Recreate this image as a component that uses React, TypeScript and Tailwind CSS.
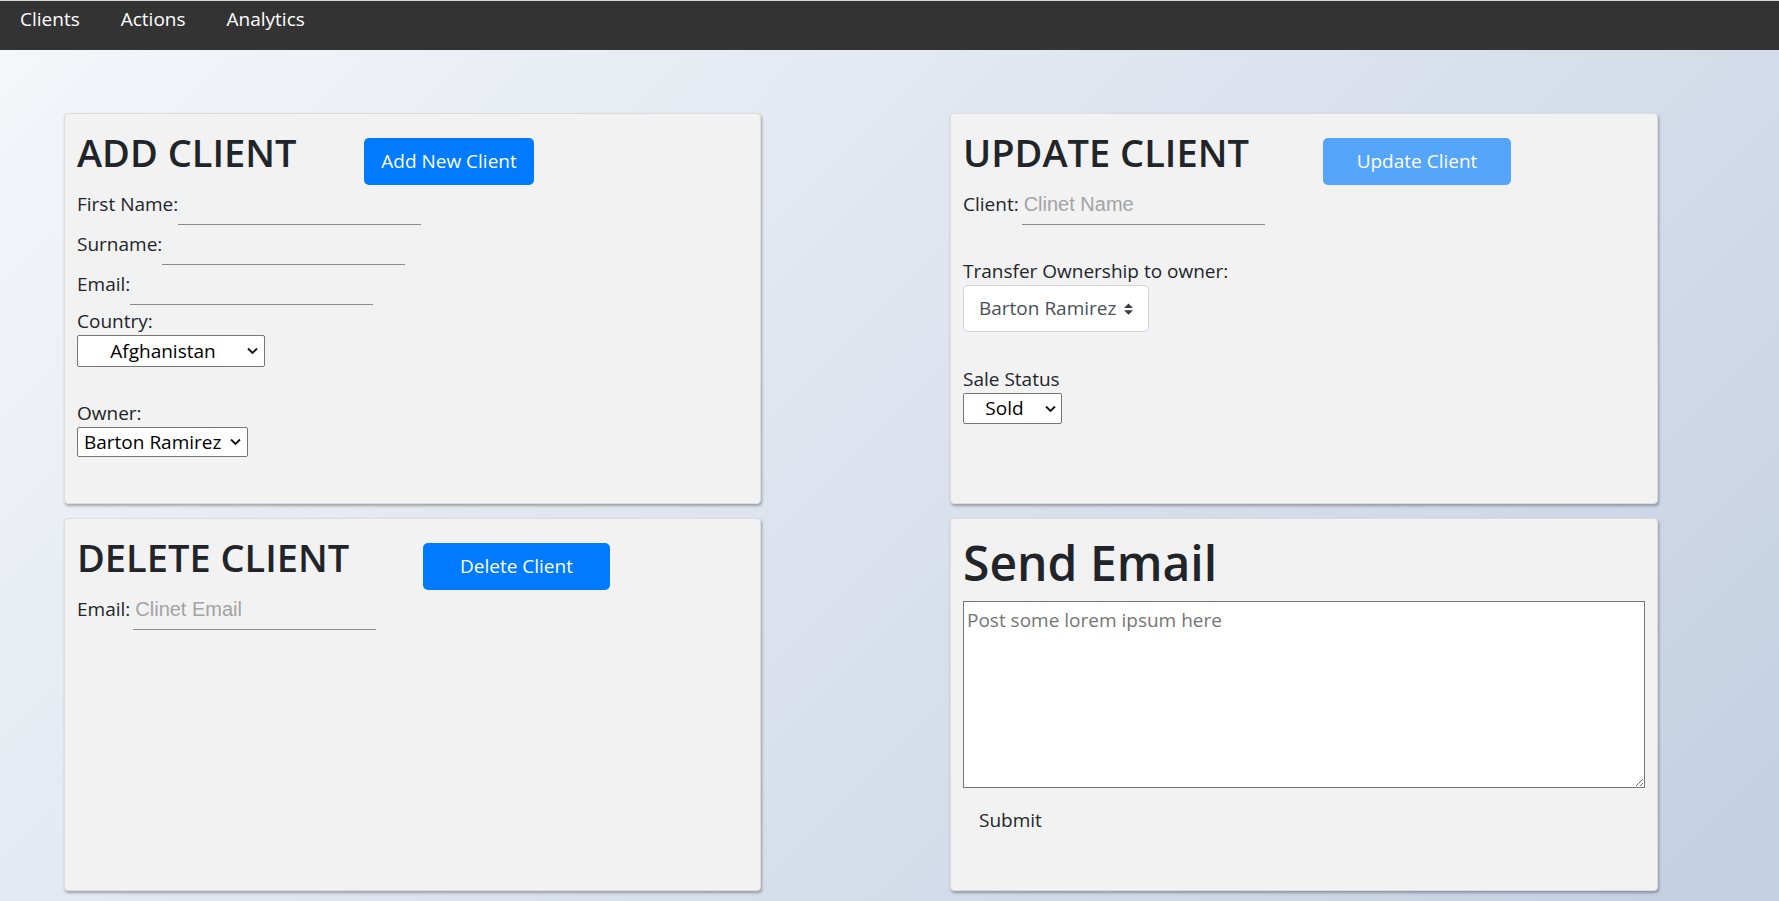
import React from "react";

function Chevron() {
  return (
    <svg width="11" height="7" viewBox="0 0 11 7" fill="none">
      <path d="M1 1l4.5 4.5L10 1" stroke="#111" strokeWidth="1.8" />
    </svg>
  );
}

function UpDown() {
  return (
    <svg width="9" height="12" viewBox="0 0 4 5">
      <path d="M2 0L0 2h4zm0 5L0 3h4z" fill="#343a40" />
    </svg>
  );
}

function Row({ label, placeholder, spaced }: { label: string; placeholder?: string; spaced?: boolean }) {
  return (
    <div className="flex h-[40px]">
      <div className={`pt-[6px] text-[19px] leading-[26px] ${spaced ? "pr-[3px]" : ""}`}>{label}</div>
      <input
        placeholder={placeholder}
        className="h-[40px] w-[243px] border-b border-[#8a8a8a] bg-transparent px-[2px] font-['Liberation_Sans',Arial,sans-serif] text-[20px] text-black outline-none placeholder:text-[#a3a3a3]"
      />
    </div>
  );
}

const cardCls =
  "rounded-[4px] border border-[#dcdcdc] bg-[#f2f2f2] px-[12px] pt-[14px] shadow-[1px_2px_3px_rgba(0,0,0,0.3)]";

export default function App() {
  return (
    <div className="h-[901px] w-full overflow-hidden bg-[linear-gradient(135deg,#f5f7fa_0%,#c3cfe2_100%)] font-['Open_Sans',sans-serif] text-[#212529]">
      <nav className="flex h-[50px] gap-[41px] border-t border-[#d6d6d6] bg-[#333333] pl-[20px] pt-[5px]">
        <a className="text-[19px] leading-[26px] text-white">Clients</a>
        <a className="text-[19px] leading-[26px] text-white">Actions</a>
        <a className="text-[19px] leading-[26px] text-white">Analytics</a>
      </nav>

      <div className="grid grid-cols-[697px_708px] gap-x-[189px] gap-y-[14px] pl-[64px] pt-[63px]">
        {/* ADD CLIENT */}
        <div className={`h-[391px] ${cardCls}`}>
          <div className="flex items-start">
            <div className="w-[287px]">
              <h2 className="text-[38px] font-semibold leading-[48px]">ADD CLIENT</h2>
            </div>
            <button className="mt-[10px] h-[47px] w-[170px] rounded-[5px] bg-[#007bff] text-[19px] text-white">
              Add New Client
            </button>
          </div>
          <Row label="First Name:" />
          <Row label="Surname:" />
          <Row label="Email:" />
          <div className="mt-[3px] text-[19px] leading-[26px]">Country:</div>
          <div className="relative mt-[1px] h-[32px] w-[188px]">
            <select className="h-full w-full appearance-none rounded-[2px] border border-[#767676] bg-white pr-[22px] pl-[6px] text-center text-[19px] text-black [text-align-last:center] outline-none">
              <option>Afghanistan</option>
            </select>
            <div className="pointer-events-none absolute top-1/2 right-[7px] -translate-y-1/2">
              <Chevron />
            </div>
          </div>
          <div className="mt-[33px] text-[19px] leading-[26px]">Owner:</div>
          <div className="relative mt-[1px] h-[30px] w-[171px]">
            <select className="h-full w-full appearance-none rounded-[2px] border border-[#767676] bg-white pr-[22px] pl-[6px] text-[19px] text-black outline-none">
              <option>Barton Ramirez</option>
            </select>
            <div className="pointer-events-none absolute top-1/2 right-[7px] -translate-y-1/2">
              <Chevron />
            </div>
          </div>
        </div>

        {/* UPDATE CLIENT */}
        <div className={`h-[391px] ${cardCls}`}>
          <div className="flex items-start">
            <div className="w-[360px]">
              <h2 className="text-[38px] font-semibold leading-[48px]">UPDATE CLIENT</h2>
            </div>
            <button className="mt-[10px] h-[47px] w-[188px] rounded-[5px] bg-[#55a5fa] text-[19px] text-white">
              Update Client
            </button>
          </div>
          <Row label="Client:" placeholder="Clinet Name" spaced />
          <div className="mt-[33px] text-[19px] leading-[26px]">Transfer Ownership to owner:</div>
          <div className="relative mt-[1px] h-[47px] w-[186px]">
            <select className="h-full w-full appearance-none rounded-[5px] border border-[#ced4da] bg-white pr-[30px] pl-[15px] text-[19px] text-[#495057] outline-none">
              <option>Barton Ramirez</option>
            </select>
            <div className="pointer-events-none absolute top-1/2 right-[16px] -translate-y-1/2">
              <UpDown />
            </div>
          </div>
          <div className="mt-[34px] text-[19px] leading-[26px]">Sale Status</div>
          <div className="relative mt-[1px] h-[31px] w-[99px]">
            <select className="h-full w-full appearance-none rounded-[2px] border border-[#767676] bg-white pr-[22px] pl-[6px] text-center text-[19px] text-black [text-align-last:center] outline-none">
              <option>Sold</option>
            </select>
            <div className="pointer-events-none absolute top-1/2 right-[6px] -translate-y-1/2">
              <Chevron />
            </div>
          </div>
        </div>

        {/* DELETE CLIENT */}
        <div className={`h-[373px] ${cardCls}`}>
          <div className="flex items-start">
            <div className="w-[346px]">
              <h2 className="text-[38px] font-semibold leading-[48px]">DELETE CLIENT</h2>
            </div>
            <button className="mt-[10px] h-[47px] w-[187px] rounded-[5px] bg-[#007bff] text-[19px] text-white">
              Delete Client
            </button>
          </div>
          <Row label="Email:" placeholder="Clinet Email" spaced />
        </div>

        {/* SEND EMAIL */}
        <div className={`h-[373px] ${cardCls}`}>
          <h1 className="text-[48px] font-semibold leading-[60px]">Send Email</h1>
          <textarea
            placeholder="Post some lorem ipsum here"
            className="mt-[8px] block h-[187px] w-full border border-[#767676] bg-white pt-[4px] pl-[3px] text-[19px] leading-[28px] text-black outline-none placeholder:text-[#757575]"
          />
          <button className="mt-[11px] px-[16px] py-[7px] text-[19px] leading-[28px] text-[#212529]">
            Submit
          </button>
        </div>
      </div>
    </div>
  );
}
